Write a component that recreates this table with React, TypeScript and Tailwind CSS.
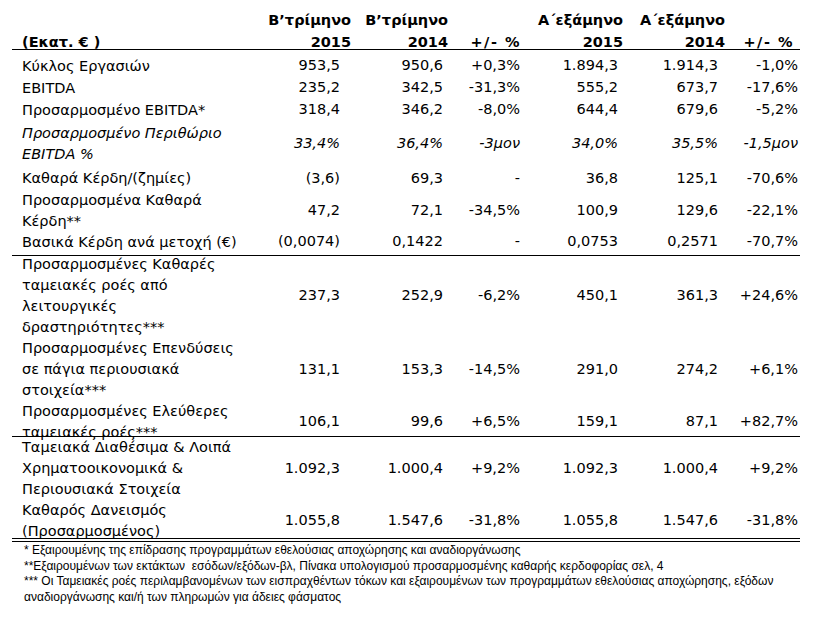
const COLS = 'grid grid-cols-[251px_94px_95px_73px_102px_100px_73px]'

type Row = {
  label: string[]
  vals: string[]
  h: string
  italic?: boolean
}

const TOP: Row[] = [
  { label: ['Κύκλος Εργασιών'], vals: ['953,5', '950,6', '+0,3%', '1.894,3', '1.914,3', '-1,0%'], h: 'h-[22px]' },
  { label: ['EBITDA'], vals: ['235,2', '342,5', '-31,3%', '555,2', '673,7', '-17,6%'], h: 'h-[22px]' },
  { label: ['Προσαρμοσμένο EBITDA*'], vals: ['318,4', '346,2', '-8,0%', '644,4', '679,6', '-5,2%'], h: 'h-[22px]' },
  { label: ['Προσαρμοσμένο Περιθώριο', 'EBITDA %'], vals: ['33,4%', '36,4%', '-3μον', '34,0%', '35,5%', '-1,5μον'], h: 'h-[46px]', italic: true },
  { label: ['Καθαρά Κέρδη/(ζημίες)'], vals: ['(3,6)', '69,3', '-', '36,8', '125,1', '-70,6%'], h: 'h-[23px]' },
  { label: ['Προσαρμοσμένα Καθαρά', 'Κέρδη**'], vals: ['47,2', '72,1', '-34,5%', '100,9', '129,6', '-22,1%'], h: 'h-[41px]' },
  { label: ['Βασικά Κέρδη ανά μετοχή (€)'], vals: ['(0,0074)', '0,1422', '-', '0,0753', '0,2571', '-70,7%'], h: 'h-[22px]' },
]

const CASH: Row[] = [
  {
    label: ['Προσαρμοσμένες Καθαρές', 'ταμειακές ροές από', 'λειτουργικές', 'δραστηριότητες***'],
    vals: ['237,3', '252,9', '-6,2%', '450,1', '361,3', '+24,6%'],
    h: 'h-[84px]',
  },
  {
    label: ['Προσαρμοσμένες Επενδύσεις', 'σε πάγια περιουσιακά', 'στοιχεία***'],
    vals: ['131,1', '153,3', '-14,5%', '291,0', '274,2', '+6,1%'],
    h: 'h-[63px]',
  },
  {
    label: ['Προσαρμοσμένες Ελεύθερες', 'ταμειακές ροές***'],
    vals: ['106,1', '99,6', '+6,5%', '159,1', '87,1', '+82,7%'],
    h: 'h-[42px]',
  },
]

const DEBT: Row[] = [
  {
    label: ['Ταμειακά Διαθέσιμα & Λοιπά', 'Χρηματοοικονομικά &', 'Περιουσιακά Στοιχεία'],
    vals: ['1.092,3', '1.000,4', '+9,2%', '1.092,3', '1.000,4', '+9,2%'],
    h: 'h-[63px]',
  },
  {
    label: ['Καθαρός Δανεισμός', '(Προσαρμοσμένος)'],
    vals: ['1.055,8', '1.547,6', '-31,8%', '1.055,8', '1.547,6', '-31,8%'],
    h: 'h-[42px]',
  },
]

// δεξί περιθώριο αριθμών ανά στήλη
const PAD = ['pr-[17px]', 'pr-[9px]', 'pr-[5px]', 'pr-[9px]', 'pr-[9px]', 'pr-[2px]']

function DataRow({ row }: { row: Row }) {
  return (
    <div className={`${COLS} ${row.h} items-center ${row.italic ? 'italic' : ''}`}>
      <div className="pl-[10px] leading-[21px] whitespace-nowrap">
        {row.label.map((l, i) => (
          <div key={i}>{l}</div>
        ))}
      </div>
      {row.vals.map((v, i) => (
        <div key={i} className={`text-right whitespace-nowrap ${PAD[i]}`}>{v}</div>
      ))}
    </div>
  )
}

export default function App() {
  return (
    <div className="w-[833px] h-[637px] bg-white text-black text-[14.5px] font-['DejaVu_Sans','Noto_Sans',sans-serif]">
      <div className="pl-[12px] w-[800px]">
        {/* κεφαλίδα */}
        <div className={`${COLS} h-[50px] border-b border-black font-bold leading-[22px] items-end`}>
          <div className="pl-[10px] -mb-[4px]">(Εκατ. € )</div>
          <div className="text-right pr-[6px] -mb-[4px] whitespace-nowrap">Β’τρίμηνο<br />2015</div>
          <div className="text-right pr-[4px] -mb-[4px] whitespace-nowrap">Β’τρίμηνο<br />2014</div>
          <div className="text-right pr-[4px] -mb-[4px] whitespace-nowrap tracking-[1.5px]">+/- %</div>
          <div className="text-right pr-[4px] -mb-[4px] whitespace-nowrap">Α΄εξάμηνο<br />2015</div>
          <div className="text-right pr-[2px] -mb-[4px] whitespace-nowrap">Α΄εξάμηνο<br />2014</div>
          <div className="text-right pr-[6px] -mb-[4px] whitespace-nowrap tracking-[1.5px]">+/- %</div>
        </div>

        <div className="pt-[5px] pb-[2px] border-b border-black">
          {TOP.map((r, i) => <DataRow key={i} row={r} />)}
        </div>

        <div className="h-[183px] border-b border-black">
          <div className="-mt-[2px]">
            {CASH.map((r, i) => <DataRow key={i} row={r} />)}
          </div>
        </div>

        <div className="h-[102px] border-b border-black">
          {DEBT.map((r, i) => <DataRow key={i} row={r} />)}
        </div>
        <div className="mt-[2px] border-t border-black" />
      </div>

      <div className="pl-[24px] pt-[1px] text-[12px] leading-[15.7px] font-['Liberation_Sans_Narrow','Arial_Narrow','Liberation_Sans',sans-serif]">
        <div>* Εξαιρουμένης της επίδρασης προγραμμάτων εθελούσιας αποχώρησης και αναδιοργάνωσης</div>
        <div>**Εξαιρουμένων των εκτάκτων&nbsp; εσόδων/εξόδων-βλ, Πίνακα υπολογισμού προσαρμοσμένης καθαρής κερδοφορίας σελ, 4</div>
        <div>*** Οι Ταμειακές ροές περιλαμβανομένων των εισπραχθέντων τόκων και εξαιρουμένων των προγραμμάτων εθελούσιας αποχώρησης, εξόδων</div>
        <div>αναδιοργάνωσης και/ή των πληρωμών για άδειες φάσματος</div>
      </div>
    </div>
  )
}
